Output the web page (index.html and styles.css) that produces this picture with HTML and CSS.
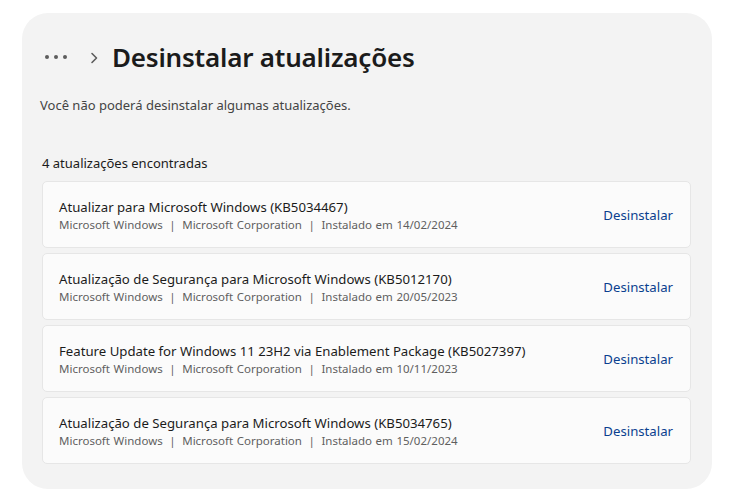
FILE: index.html
```html
<!DOCTYPE html>
<html lang="pt-BR">
<head>
  <meta charset="UTF-8">
  <title>Desinstalar atualizações</title>
  <link rel="stylesheet" href="styles.css">
</head>
<body>
  <div class="panel">
    <div class="header">
      <svg class="dots" width="24" height="6" viewBox="0 0 24 6">
        <circle cx="3" cy="3" r="2" fill="#5d5d5d"/>
        <circle cx="12" cy="3" r="2" fill="#5d5d5d"/>
        <circle cx="21" cy="3" r="2" fill="#5d5d5d"/>
      </svg>
      <svg class="chevron" width="8" height="12" viewBox="0 0 8 12">
        <path d="M2 1.5 L6.5 6 L2 10.5" fill="none" stroke="#5d5d5d" stroke-width="1.6" stroke-linecap="round" stroke-linejoin="round"/>
      </svg>
      <h1>Desinstalar atualizações</h1>
    </div>
    <p class="note">Você não poderá desinstalar algumas atualizações.</p>
    <p class="count">4 atualizações encontradas</p>
    <div class="list">
      <div class="item">
        <div class="info">
          <div class="name">Atualizar para Microsoft Windows (KB5034467)</div>
          <div class="meta">Microsoft Windows <span class="sep">|</span> Microsoft Corporation <span class="sep">|</span> Instalado em 14/02/2024</div>
        </div>
        <a class="remove" href="#">Desinstalar</a>
      </div>
      <div class="item">
        <div class="info">
          <div class="name">Atualização de Segurança para Microsoft Windows (KB5012170)</div>
          <div class="meta">Microsoft Windows <span class="sep">|</span> Microsoft Corporation <span class="sep">|</span> Instalado em 20/05/2023</div>
        </div>
        <a class="remove" href="#">Desinstalar</a>
      </div>
      <div class="item">
        <div class="info">
          <div class="name">Feature Update for Windows 11 23H2 via Enablement Package (KB5027397)</div>
          <div class="meta">Microsoft Windows <span class="sep">|</span> Microsoft Corporation <span class="sep">|</span> Instalado em 10/11/2023</div>
        </div>
        <a class="remove" href="#">Desinstalar</a>
      </div>
      <div class="item">
        <div class="info">
          <div class="name">Atualização de Segurança para Microsoft Windows (KB5034765)</div>
          <div class="meta">Microsoft Windows <span class="sep">|</span> Microsoft Corporation <span class="sep">|</span> Instalado em 15/02/2024</div>
        </div>
        <a class="remove" href="#">Desinstalar</a>
      </div>
    </div>
  </div>
</body>
</html>
```

FILE: styles.css
```css
html {
  background: #fff;
}
body {
  margin: 0;
  padding: 13px 18px 11px 22px;
  font-family: "Noto Sans", sans-serif;
  color: #1b1b1b;
}
.panel {
  background: #f3f3f3;
  border-radius: 26px;
  padding: 24px 21px 24px 18px;
  height: 476px;
  box-sizing: border-box;
}
.header {
  display: flex;
  align-items: center;
  height: 40px;
}
.dots {
  margin-left: 4px;
}
.chevron {
  margin-left: 22px;
  margin-top: 2px;
}
h1 {
  margin: 0 0 0 14px;
  font-size: 26px;
  font-weight: 600;
  letter-spacing: -0.2px;
}
.note {
  margin: 19px 0 0;
  font-size: 13px;
  color: #444;
}
.count {
  margin: 40px 0 0 2px;
  font-size: 13px;
  color: #1b1b1b;
}
.list {
  margin: 9px 0 0 2px;
  display: flex;
  flex-direction: column;
  gap: 5px;
}
.item {
  display: flex;
  align-items: center;
  height: 67px;
  box-sizing: border-box;
  background: #fbfbfb;
  border: 1px solid #e6e6e6;
  border-radius: 5px;
  padding: 0 17px 0 16px;
}
.info {
  flex: 1;
}
.name {
  font-size: 13.2px;
  color: #1b1b1b;
}
.meta {
  margin-top: 1px;
  font-size: 11.5px;
  color: #5f5f5f;
  word-spacing: 0.6px;
}
.sep {
  margin: 0 3px;
}
.remove {
  font-size: 13.2px;
  color: #0a3f8f;
  text-decoration: none;
}
```
